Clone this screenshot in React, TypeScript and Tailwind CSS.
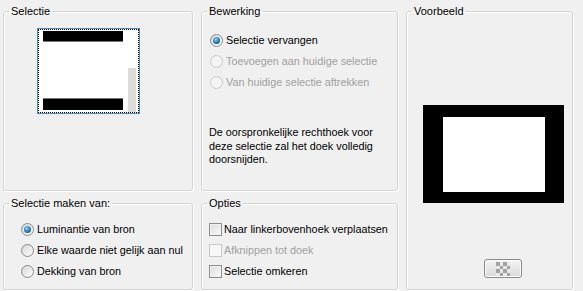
import React from "react";

const font = { fontFamily: '"Liberation Sans", Arial, sans-serif' };

const Group = ({
  title,
  className,
  children,
}: {
  title: string;
  className?: string;
  children?: React.ReactNode;
}) => (
  <fieldset
    className={`min-w-0 rounded-[3px] border border-[#d5d5d5] shadow-[1px_1px_0_#ffffff,inset_1px_1px_0_#ffffff] ${className ?? ""}`}
  >
    <legend className="ml-[5px] px-[2px] text-[11px] leading-[14px] text-black">{title}</legend>
    {children}
  </fieldset>
);

const Radio = ({ label, checked, disabled }: { label: string; checked?: boolean; disabled?: boolean }) => (
  <div className="flex h-[21px] items-center gap-[3px]">
    <span
      className={`flex h-[13px] w-[13px] shrink-0 items-center justify-center rounded-full border ${
        disabled
          ? "border-[#c9c9c9] bg-[#f4f4f4]"
          : "border-[#8a8a8a] bg-gradient-to-br from-[#d6d6d6] to-[#ffffff]"
      }`}
    >
      {checked && (
        <span className="h-[7px] w-[7px] rounded-full bg-[radial-gradient(circle_at_40%_35%,#8fd3f5,#1d6fa8_60%,#0d4a78)]" />
      )}
    </span>
    <span className={`text-[10.8px] leading-[13px] ${disabled ? "text-[#a0a0a0]" : "text-black"}`}>{label}</span>
  </div>
);

const Check = ({ label, disabled }: { label: string; disabled?: boolean }) => (
  <div className="flex h-[21px] items-center gap-[2px]">
    <span
      className={`h-[13px] w-[13px] shrink-0 border ${
        disabled
          ? "border-[#c9c9c9] bg-[#f7f7f7]"
          : "border-[#8e8f8f] bg-gradient-to-br from-[#dcdcdc] to-[#fbfbfb] shadow-[inset_0_0_0_1px_#f0f0f0]"
      }`}
    />
    <span className={`text-[10.8px] leading-[13px] ${disabled ? "text-[#a0a0a0]" : "text-black"}`}>{label}</span>
  </div>
);

export default function App() {
  return (
    <div className="h-[291px] w-[583px] overflow-hidden bg-[#f0f0f0] pl-[3px] pt-[4px]" style={font}>
      <div className="grid grid-cols-[190px_197px_167px] grid-rows-[187px_94px] gap-x-[8px] gap-y-[5px]">
        <Group title="Selectie" className="h-[187px]">
          <div className="ml-[33px] mt-[10px] h-[86px] w-[103px] border border-[#3d8fd1]">
            <div className="h-full w-full border border-dotted border-black bg-white">
              <svg width="99" height="82" viewBox="0 0 99 82">
                <rect x="4" y="1" width="80" height="10" fill="#000" />
                <rect x="4" y="11" width="80" height="1" fill="#777" />
                <rect x="4" y="68" width="80" height="1" fill="#777" />
                <rect x="4" y="69" width="80" height="11" fill="#000" />
                <rect x="89" y="38" width="8" height="44" fill="#dcdcdc" />
              </svg>
            </div>
          </div>
        </Group>

        <Group title="Bewerking" className="h-[187px]">
          <div className="pl-[8px] pt-[12px]">
            <Radio label="Selectie vervangen" checked />
            <Radio label="Toevoegen aan huidige selectie" disabled />
            <Radio label="Van huidige selectie aftrekken" disabled />
          </div>
          <p className="ml-[7px] mt-[33px] w-[180px] text-[10.8px] leading-[13.5px] text-black">
            De oorspronkelijke rechthoek voor deze selectie zal het doek volledig doorsnijden.
          </p>
        </Group>

        <Group title="Voorbeeld" className="row-span-2 h-[286px]">
          <div className="ml-[16px] mt-[87px] h-[98px] w-[141px] border-b-[11px] border-l-[20px] border-r-[19px] border-t-[12px] border-black bg-white" />
          <button className="ml-[77px] mt-[56px] flex h-[19px] w-[38px] items-center justify-center rounded-[3px] border border-[#8a8a8a] bg-gradient-to-b from-[#f4f4f4] to-[#dadada] shadow-[inset_0_0_0_1px_#fbfbfb]">
            <svg width="14" height="14" viewBox="0 0 4 4" shapeRendering="crispEdges">
              {[0, 1, 2, 3].map((r) =>
                [0, 1, 2, 3].map((c) => (
                  <rect
                    key={`${r}-${c}`}
                    x={c}
                    y={r}
                    width="1"
                    height="1"
                    fill={(r + c) % 2 === 0 ? "#a3a3a3" : "#e8e8e8"}
                  />
                ))
              )}
            </svg>
          </button>
        </Group>

        <Group title="Selectie maken van:" className="h-[94px]">
          <div className="pl-[17px] pt-[9px]">
            <Radio label="Luminantie van bron" checked />
            <Radio label="Elke waarde niet gelijk aan nul" />
            <Radio label="Dekking van bron" />
          </div>
        </Group>

        <Group title="Opties" className="h-[94px]">
          <div className="pl-[7px] pt-[9px]">
            <Check label="Naar linkerbovenhoek verplaatsen" />
            <Check label="Afknippen tot doek" disabled />
            <Check label="Selectie omkeren" />
          </div>
        </Group>
      </div>
    </div>
  );
}
